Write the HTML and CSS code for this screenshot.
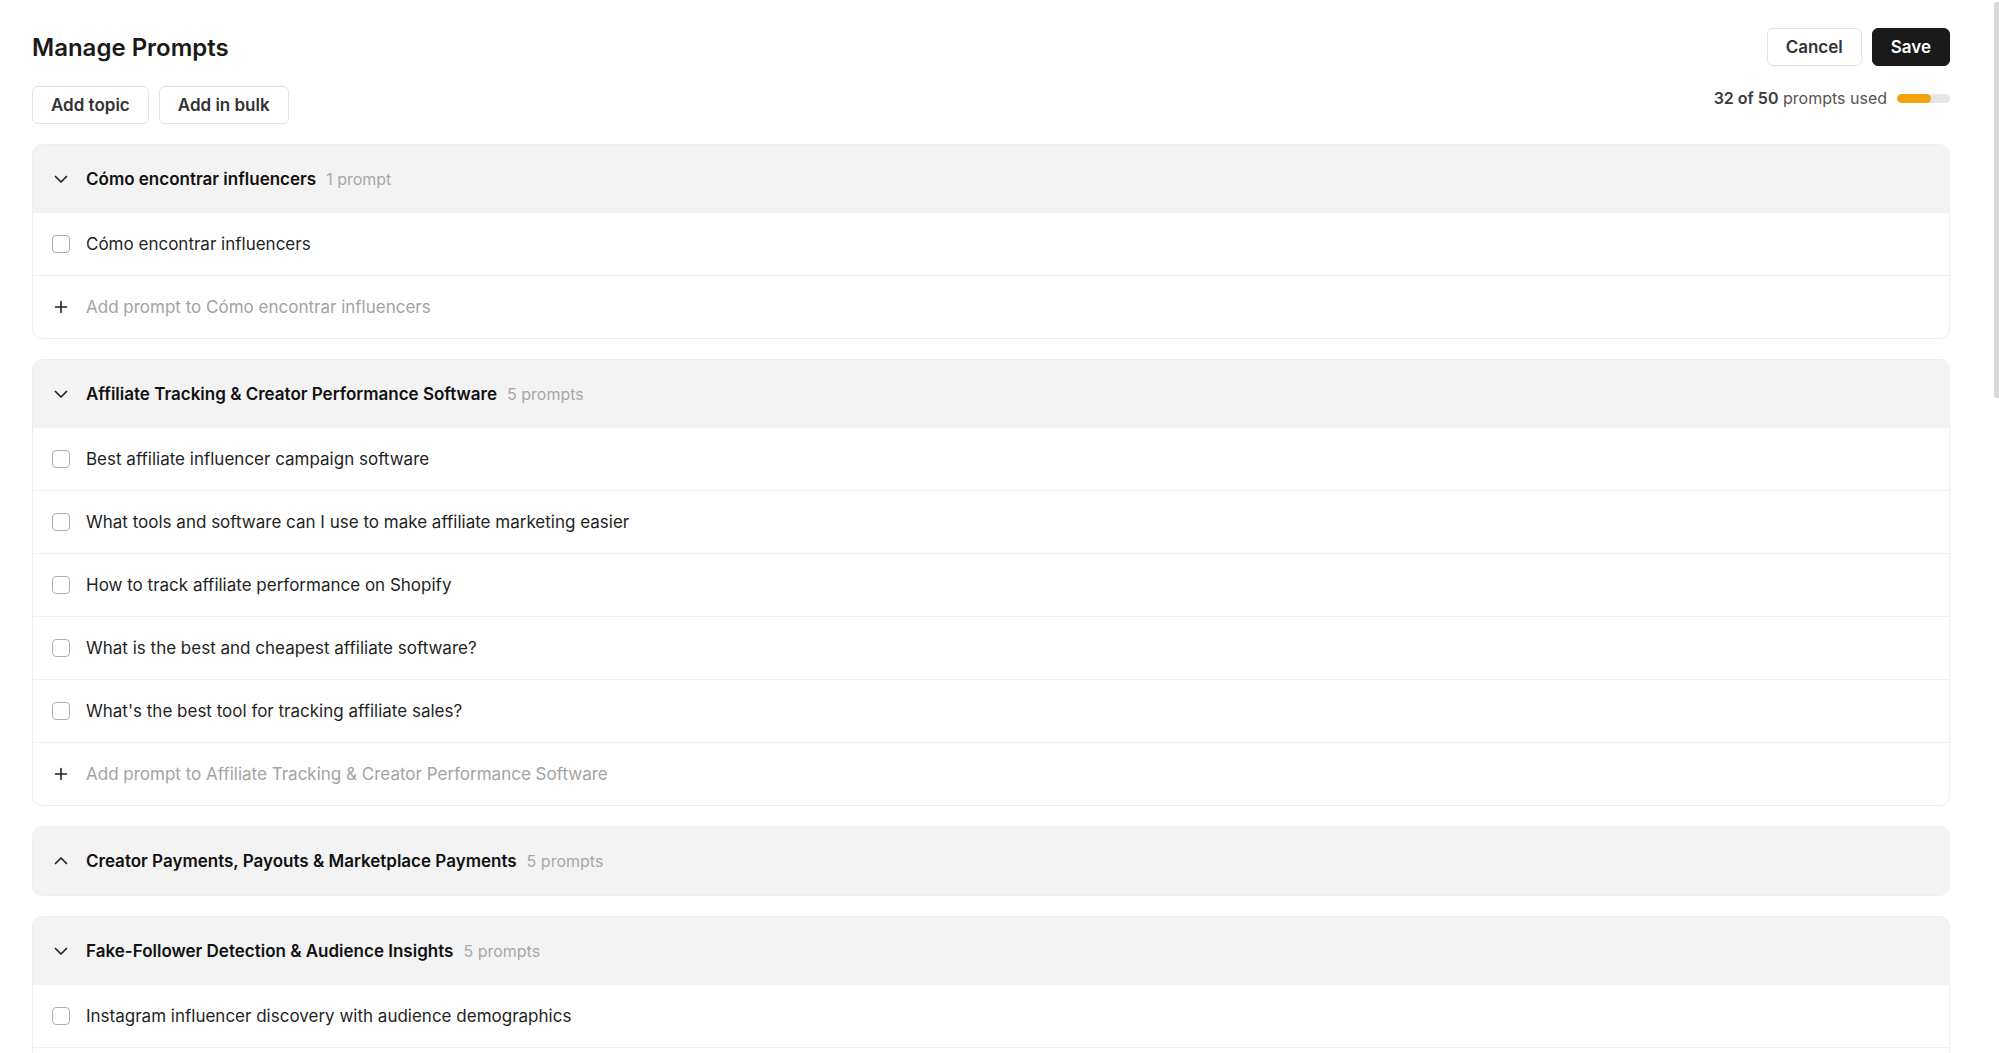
FILE: index.html
```html
<!DOCTYPE html>
<html lang="en">
<head>
    <meta charset="UTF-8">
    <meta name="viewport" content="width=device-width, initial-scale=1.0">
    <title>Manage Prompts</title>
    <link rel="stylesheet" href="styles.css">
</head>
<body>

<div class="page">
    <header class="top-bar">
        <h1>Manage Prompts</h1>
        <div class="actions">
            <button class="btn">Cancel</button>
            <button class="btn btn-dark">Save</button>
        </div>
    </header>

    <div class="toolbar">
        <div class="actions">
            <button class="btn">Add topic</button>
            <button class="btn">Add in bulk</button>
        </div>
        <div class="usage">
            <span><b>32 of 50</b> prompts used</span>
            <div class="usage-bar"><div class="usage-fill" style="width: 64%;"></div></div>
        </div>
    </div>

    <div class="topics">
        <!-- Tema 1 -->
        <section class="topic">
            <div class="topic-head">
                <span class="icon"><svg viewBox="0 0 14 14" width="14" height="14"><path d="M1.5 4.5L7 10l5.5-5.5" fill="none" stroke="#222" stroke-width="1.7" stroke-linecap="round" stroke-linejoin="round"/></svg></span>
                <span class="topic-name">Cómo encontrar influencers</span>
                <span class="topic-count">1 prompt</span>
            </div>
            <div class="prompt"><span class="check"></span>Cómo encontrar influencers</div>
            <div class="prompt add"><span class="icon"><svg viewBox="0 0 14 14" width="14" height="14"><path d="M7 1.5v11M1.5 7h11" fill="none" stroke="#222" stroke-width="1.6" stroke-linecap="round"/></svg></span>Add prompt to Cómo encontrar influencers</div>
        </section>

        <!-- Tema 2 -->
        <section class="topic">
            <div class="topic-head">
                <span class="icon"><svg viewBox="0 0 14 14" width="14" height="14"><path d="M1.5 4.5L7 10l5.5-5.5" fill="none" stroke="#222" stroke-width="1.7" stroke-linecap="round" stroke-linejoin="round"/></svg></span>
                <span class="topic-name">Affiliate Tracking &amp; Creator Performance Software</span>
                <span class="topic-count">5 prompts</span>
            </div>
            <div class="prompt"><span class="check"></span>Best affiliate influencer campaign software</div>
            <div class="prompt"><span class="check"></span>What tools and software can I use to make affiliate marketing easier</div>
            <div class="prompt"><span class="check"></span>How to track affiliate performance on Shopify</div>
            <div class="prompt"><span class="check"></span>What is the best and cheapest affiliate software?</div>
            <div class="prompt"><span class="check"></span>What's the best tool for tracking affiliate sales?</div>
            <div class="prompt add"><span class="icon"><svg viewBox="0 0 14 14" width="14" height="14"><path d="M7 1.5v11M1.5 7h11" fill="none" stroke="#222" stroke-width="1.6" stroke-linecap="round"/></svg></span>Add prompt to Affiliate Tracking &amp; Creator Performance Software</div>
        </section>

        <!-- Tema 3 (cerrado) -->
        <section class="topic">
            <div class="topic-head">
                <span class="icon"><svg viewBox="0 0 14 14" width="14" height="14"><path d="M1.5 9.5L7 4l5.5 5.5" fill="none" stroke="#222" stroke-width="1.7" stroke-linecap="round" stroke-linejoin="round"/></svg></span>
                <span class="topic-name">Creator Payments, Payouts &amp; Marketplace Payments</span>
                <span class="topic-count">5 prompts</span>
            </div>
        </section>

        <!-- Tema 4 -->
        <section class="topic">
            <div class="topic-head">
                <span class="icon"><svg viewBox="0 0 14 14" width="14" height="14"><path d="M1.5 4.5L7 10l5.5-5.5" fill="none" stroke="#222" stroke-width="1.7" stroke-linecap="round" stroke-linejoin="round"/></svg></span>
                <span class="topic-name">Fake-Follower Detection &amp; Audience Insights</span>
                <span class="topic-count">5 prompts</span>
            </div>
            <div class="prompt"><span class="check"></span>Instagram influencer discovery with audience demographics</div>
            <div class="prompt"></div>
        </section>
    </div>
</div>

<div class="scroll-thumb"></div>

</body>
</html>
```

FILE: styles.css
```css
body {
    font-family: 'Inter', 'Liberation Sans', sans-serif;
    background-color: #ffffff;
    color: #1f1f1f;
    margin: 0;
    padding: 0;
    height: 100vh;
    overflow: hidden;
}

.page {
    padding: 28px 49px 0 32px;
}

.top-bar {
    display: flex;
    justify-content: space-between;
    align-items: center;
    height: 38px;
}

h1 {
    margin: 0;
    font-size: 24px;
    font-weight: 600;
    color: #1a1a1a;
}

.actions {
    display: flex;
    gap: 10px;
}

.btn {
    height: 38px;
    padding: 0 18px;
    background-color: #ffffff;
    border: 1px solid #e4e4e4;
    border-radius: 6px;
    font-family: inherit;
    font-size: 17px;
    font-weight: 600;
    color: #333333;
    cursor: pointer;
}

.btn-dark {
    background-color: #1a1a1a;
    border-color: #1a1a1a;
    color: #ffffff;
}

.toolbar {
    display: flex;
    justify-content: space-between;
    align-items: flex-start;
    margin-top: 20px;
}

.usage {
    display: flex;
    align-items: center;
    gap: 10px;
    height: 24px;
    font-size: 16px;
    color: #555555;
}

.usage b {
    font-weight: 600;
    color: #3a3a3a;
}

.usage-bar {
    width: 53px;
    height: 9px;
    border-radius: 5px;
    background-color: #e6e6e6;
    overflow: hidden;
}

.usage-fill {
    height: 100%;
    border-radius: 5px;
    background-color: #f2a20c;
}

.topics {
    display: flex;
    flex-direction: column;
    gap: 20px;
    margin-top: 20px;
}

.topic {
    border: 1px solid #eeeeee;
    border-radius: 10px;
    overflow: hidden;
}

.topic-head {
    display: flex;
    align-items: center;
    height: 68px;
    padding-left: 19px;
    background-color: #f3f3f3;
}

.icon {
    display: flex;
    align-items: center;
    justify-content: center;
    width: 18px;
    margin-right: 16px;
}

.topic-name {
    font-size: 17px;
    font-weight: 600;
    color: #111111;
}

.topic-count {
    margin-left: 10px;
    font-size: 16px;
    color: #a8a8a8;
}

.prompt {
    display: flex;
    align-items: center;
    height: 62px;
    padding-left: 19px;
    border-top: 1px solid #f0f0f0;
    font-size: 17px;
    color: #1f1f1f;
}

.topic-head + .prompt {
    border-top: none;
}

.prompt.add {
    color: #a3a3a3;
}

.check {
    width: 16px;
    height: 16px;
    margin-right: 16px;
    border: 1px solid #adadb5;
    border-radius: 4px;
}

.scroll-thumb {
    position: fixed;
    top: 2px;
    right: 0;
    width: 5px;
    height: 396px;
    border-radius: 3px 0 0 3px;
    background-color: #d9d9dd;
}
```
